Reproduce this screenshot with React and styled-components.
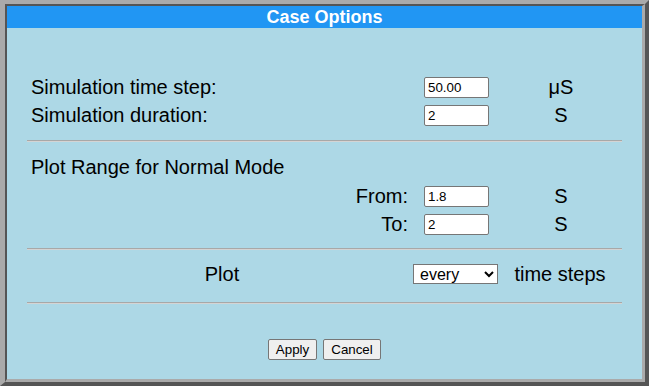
import React from 'react'
import styled, { createGlobalStyle } from 'styled-components'

const GlobalStyle = createGlobalStyle`
  html, body {
    margin: 0;
    padding: 0;
    background: #ffffff;
  }
  body {
    font-family: "Liberation Sans", Arial, sans-serif;
  }
`

const Frame = styled.div`
  box-sizing: border-box;
  width: 649px;
  height: 386px;
  border-style: solid;
  border-width: 4px 4px 4px 5px;
  border-color: #aaaaaa #555555 #555555 #aaaaaa;
`

const Panel = styled.div`
  box-sizing: border-box;
  height: 100%;
  border-style: solid;
  border-width: 2px 3px 3px 2px;
  border-color: #555555 #aaaaaa #aaaaaa #555555;
  background: #add8e6;
  display: flex;
  flex-direction: column;
`

const TitleBar = styled.div`
  height: 22px;
  line-height: 22px;
  background: #2196f3;
  color: #ffffff;
  font-weight: bold;
  font-size: 18px;
  text-align: center;
`

const Body = styled.div`
  padding: 45px 20px 0 20px;
  display: flex;
  flex-direction: column;
  color: #000000;
  font-size: 20px;
`

const Row = styled.div`
  display: grid;
  grid-template-columns: ${p => p.$plot ? '386px 85px 1fr' : '397px 76px 1fr'};
  align-items: center;
  height: ${p => p.$h ?? 28}px;
`

const Label = styled.div`
  padding: ${p => p.$right ? '0 16px 0 0' : '0 0 0 4px'};
  text-align: ${p => p.$align || 'left'};
  grid-column: ${p => p.$span ? '1 / -1' : 'auto'};
`

const Unit = styled.div`
  text-align: center;
`

const Field = styled.input`
  box-sizing: border-box;
  width: 65px;
  height: 21px;
  margin: 0;
  padding: 1px 3px;
  border: 1px solid #767676;
  border-radius: 2px;
  background: #ffffff;
  color: #000000;
  font-family: "Liberation Sans", Arial, sans-serif;
  font-size: 13.33px;
`

const Picker = styled.select`
  box-sizing: border-box;
  width: 85px;
  height: 20px;
  margin: 0;
  padding: 0 2px;
  border: 1px solid #767676;
  border-radius: 0;
  background: #ffffff;
  color: #000000;
  font-family: "Liberation Sans", Arial, sans-serif;
  font-size: 16px;
`

const Rule = styled.hr`
  width: 100%;
  height: 0;
  margin: ${p => p.$top ?? 11}px 0 ${p => p.$bottom ?? 11}px 0;
  border: 0;
  border-top: 1px solid #a8a8a8;
  border-bottom: 1px solid #d4d4d4;
`

const Buttons = styled.div`
  display: flex;
  justify-content: center;
  gap: 6px;
  margin-top: 35px;
`

const Btn = styled.button`
  box-sizing: border-box;
  height: 21px;
  width: ${p => p.$w}px;
  padding: 0;
  border: 1px solid #767676;
  border-radius: 2px;
  background: #efefef;
  color: #000000;
  font-family: "Liberation Sans", Arial, sans-serif;
  font-size: 13.33px;
`

export default function App() {
  return (
    <>
      <GlobalStyle />
      <Frame>
        <Panel>
          <TitleBar>Case Options</TitleBar>
          <Body>
            <Row>
              <Label>Simulation time step:</Label>
              <Field defaultValue="50.00" />
              <Unit>μS</Unit>
            </Row>
            <Row>
              <Label>Simulation duration:</Label>
              <Field defaultValue="2" />
              <Unit>S</Unit>
            </Row>
            <Rule />
            <Row $h={29}>
              <Label $span>Plot Range for Normal Mode</Label>
            </Row>
            <Row>
              <Label $right $align="right">From:</Label>
              <Field defaultValue="1.8" />
              <Unit>S</Unit>
            </Row>
            <Row>
              <Label $right $align="right">To:</Label>
              <Field defaultValue="2" />
              <Unit>S</Unit>
            </Row>
            <Rule $top={10} $bottom={10} />
            <Row $plot>
              <Label $align="center">Plot</Label>
              <Picker defaultValue="every">
                <option value="every">every</option>
                <option value="2">2nd</option>
                <option value="5">5th</option>
                <option value="10">10th</option>
              </Picker>
              <Unit>time steps</Unit>
            </Row>
            <Rule $top={14} $bottom={0} />
          </Body>
          <Buttons>
            <Btn $w={49}>Apply</Btn>
            <Btn $w={58}>Cancel</Btn>
          </Buttons>
        </Panel>
      </Frame>
    </>
  )
}
